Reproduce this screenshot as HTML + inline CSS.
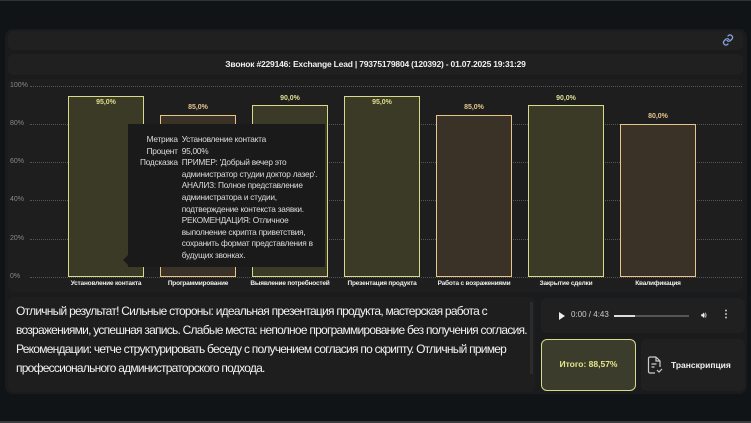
<!DOCTYPE html>
<html><head><meta charset="utf-8"><style>
*{box-sizing:border-box;margin:0;padding:0}
body{width:751px;height:423px;background:#111417;font-family:"Liberation Sans","Noto Sans CJK SC",sans-serif;color:#e6e6e6;position:relative;overflow:hidden}
.abs{position:absolute}
.outer{left:5px;top:29px;width:742px;height:365px;background:#1a1b1c;border-radius:8px}
.card{background:#202020;border-radius:6px}
.grid{position:absolute;left:30px;width:712px;border-top:1px dotted #555}
.yl{position:absolute;left:10px;font-size:7px;color:#888}
.bar{position:absolute;width:76px;border:1.5px solid #d8d98a;background:#3a3a26}
.bar.o{border-color:#e6c48a;background:#3a3226}
.pv{position:absolute;width:76px;text-align:center;font-size:7px;font-weight:bold;color:#dede90}
.pv.o{color:#e6c48a}
.xl{position:absolute;width:100px;text-align:center;font-size:6.5px;font-weight:bold;color:#eee;top:280px;letter-spacing:-0.2px}
.tip{left:128px;top:124px;width:197px;height:143px;background:#1a1a1a}
.tip td{vertical-align:top;padding:0}
</style></head><body>
<div class="abs" style="left:0;top:0;width:751px;height:1px;background:#333"></div>
<div class="abs outer"></div>
<div class="abs card" style="left:8px;top:31px;width:735px;height:19px"></div>
<svg class="abs" style="left:722px;top:34px" width="12" height="12" viewBox="0 0 24 24" fill="none" stroke="#8aa6e8" stroke-width="2.5" stroke-linecap="round"><path d="M10 13a5 5 0 0 0 7 0l3-3a5 5 0 0 0-7-7l-1 1"/><path d="M14 11a5 5 0 0 0-7 0l-3 3a5 5 0 0 0 7 7l1-1"/></svg>
<div class="abs card" style="left:8px;top:54px;width:735px;height:21px;text-align:center;font-size:8.5px;font-weight:bold;line-height:21px;color:#f0f0f0;letter-spacing:-0.2px">Звонок #229146: Exchange Lead | 79375179804 (120392) - 01.07.2025 19:31:29</div>
<div class="abs card" style="left:8px;top:79px;width:735px;height:213px;background:#1e1e1e"></div>
<div class="grid" style="top:86px"></div><div class="yl" style="top:82px">100%</div>
<div class="grid" style="top:124px"></div><div class="yl" style="top:120px">80%</div>
<div class="grid" style="top:162px"></div><div class="yl" style="top:158px">60%</div>
<div class="grid" style="top:200px"></div><div class="yl" style="top:196px">40%</div>
<div class="grid" style="top:239px"></div><div class="yl" style="top:235px">20%</div>
<div class="grid" style="top:277px"></div><div class="yl" style="top:273px">0%</div>
<div class="bar" style="left:68px;top:96px;height:181px"></div><div class="pv" style="left:68px;top:99px">95,0%</div>
<div class="bar o" style="left:160px;top:115px;height:162px"></div><div class="pv o" style="left:160px;top:104px">85,0%</div>
<div class="bar" style="left:252px;top:105px;height:172px"></div><div class="pv" style="left:252px;top:95px">90,0%</div>
<div class="bar" style="left:344px;top:96px;height:181px"></div><div class="pv" style="left:344px;top:99px">95,0%</div>
<div class="bar o" style="left:436px;top:115px;height:162px"></div><div class="pv o" style="left:436px;top:104px">85,0%</div>
<div class="bar" style="left:528px;top:105px;height:172px"></div><div class="pv" style="left:528px;top:95px">90,0%</div>
<div class="bar o" style="left:620px;top:124px;height:153px"></div><div class="pv o" style="left:620px;top:113px">80,0%</div>
<div class="xl" style="left:56px">Установление контакта</div>
<div class="xl" style="left:148px">Программирование</div>
<div class="xl" style="left:240px">Выявление потребностей</div>
<div class="xl" style="left:332px">Презентация продукта</div>
<div class="xl" style="left:424px">Работа с возражениями</div>
<div class="xl" style="left:516px">Закрытие сделки</div>
<div class="xl" style="left:608px">Квалификация</div>
<div class="abs" style="left:123px;top:255px;width:0;height:0;border:5px solid transparent;border-right-color:#1a1a1a;border-left:0"></div>
<div class="abs tip"><table style="position:absolute;left:12px;top:10px;border-spacing:0;font-size:8.3px;line-height:11.6px;color:#ddd;letter-spacing:-0.25px">
<tr><td style="text-align:right;padding-right:4px">Метрика</td><td>Установление контакта</td></tr>
<tr><td style="text-align:right;padding-right:4px">Процент</td><td>95,00%</td></tr>
<tr><td style="text-align:right;padding-right:4px">Подсказка</td><td style="width:148px">ПРИМЕР: 'Добрый вечер это<br>администратор студии доктор лазер'.<br>АНАЛИЗ: Полное представление<br>администратора и студии,<br>подтверждение контекста заявки.<br>РЕКОМЕНДАЦИЯ: Отличное<br>выполнение скрипта приветствия,<br>сохранить формат представления в<br>будущих звонках.</td></tr></table></div>
<div class="abs card" style="left:8px;top:297px;width:527px;height:95px;background:#1e1e1e;padding:5px 8px;font-size:12px;letter-spacing:-0.75px;line-height:19px;color:#f2f2f2;white-space:nowrap;overflow:hidden">Отличный результат! Сильные стороны: идеальная презентация продукта, мастерская работа с<br>возражениями, успешная запись. Слабые места: неполное программирование без получения согласия.<br>Рекомендации: четче структурировать беседу с получением согласия по скрипту. Отличный пример<br>профессионального администраторского подхода.</div>
<div class="abs" style="left:530px;top:302px;width:3px;height:72px;background:#2c2c2c"></div>
<div class="abs card" style="left:541px;top:298px;width:204px;height:35px"></div>
<div class="abs" style="left:559px;top:312px;width:0;height:0;border-left:6px solid #eee;border-top:4px solid transparent;border-bottom:4px solid transparent"></div>
<div class="abs" style="left:571px;top:310px;font-size:8px;color:#ccc">0:00 / 4:43</div>
<div class="abs" style="left:614px;top:315px;width:75px;height:2px;background:#555"></div>
<div class="abs" style="left:614px;top:315px;width:21px;height:2px;background:#ddd"></div>
<div class="abs" style="left:701px;top:310px;font-size:9px;color:#eee">🔊&#xFE0E;</div>
<div class="abs" style="left:721px;top:309px;font-size:10px;color:#eee;font-weight:bold">⋮</div>
<div class="abs" style="left:541px;top:339px;width:95px;height:52px;border:1.5px solid #d8d98a;border-radius:6px;background:#3c3c2c;text-align:center;line-height:49px;font-size:8.5px;font-weight:bold;color:#e6e68a">Итого: 88,57%</div>
<div class="abs card" style="left:641px;top:339px;width:104px;height:52px"></div>
<svg class="abs" style="left:647px;top:356px" width="16" height="18" viewBox="0 0 16 18" fill="none" stroke="#ccc" stroke-width="1.2"><path d="M9 1H3a1.5 1.5 0 0 0-1.5 1.5v13A1.5 1.5 0 0 0 3 17h5M9 1l4 4v6M9 1v4h4M4.5 8h5M4.5 11h3M10 14l2 2 3-3"/></svg>
<div class="abs" style="left:671px;top:360px;font-size:8.5px;font-weight:bold;color:#f0f0f0">Транскрипция</div>
<div class="abs" style="left:0;top:421px;width:751px;height:2px;background:#3a3a3a"></div>
</body></html>
